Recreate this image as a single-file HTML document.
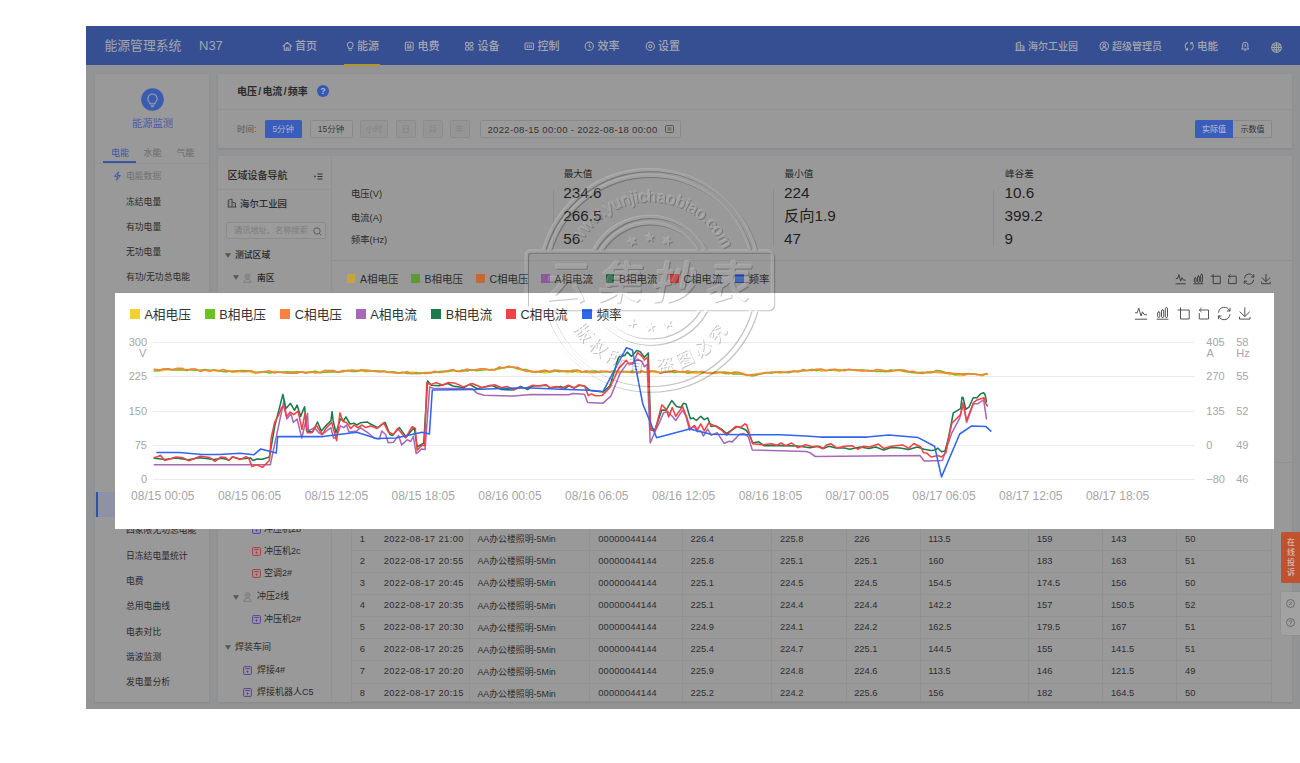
<!DOCTYPE html>
<html lang="zh-CN"><head><meta charset="utf-8"><title>能源管理系统</title>
<style>
html,body{margin:0;padding:0;background:#fff}
body{width:1300px;height:763px;position:relative;overflow:hidden;font-family:"Liberation Sans","Noto Sans CJK SC",sans-serif;}
.t{position:absolute;white-space:nowrap;margin:0}
.r{position:absolute;box-sizing:border-box}
svg{position:absolute;overflow:visible}
</style></head><body>
<div class="r" style="left:86.00px;top:26.00px;width:1214.00px;height:683.00px;background:#929394;"></div>
<div class="r" style="left:86.00px;top:26.00px;width:1214.00px;height:39.00px;background:#364f93;"></div>
<div class="t" style="top:36.70px;font-size:12.8px;line-height:18px;color:#a3a6ae;left:104.50px;">能源管理系统</div>
<div class="t" style="top:36.70px;font-size:13px;line-height:18px;color:#a3a6ae;left:199.00px;">N37</div>
<svg style="left:282.0px;top:41.0px" width="10.5" height="10.5" viewBox="0 0 16 16" fill="none" stroke="#a3a6ae" stroke-width="1.6" stroke-linecap="round" stroke-linejoin="round"><path d="M1.5 8 8 2l6.500 6M3.5 7.5V14h9V7.500M6.500 14v-3.500h3V14"/></svg>
<div class="t" style="top:39.30px;font-size:11px;line-height:15px;color:#a3a6ae;font-weight:500;left:295.00px;">首页</div>
<svg style="left:344.5px;top:41.0px" width="10.5" height="10.5" viewBox="0 0 16 16" fill="none" stroke="#a3a6ae" stroke-width="1.6" stroke-linecap="round" stroke-linejoin="round"><path d="M8 1.500a4.500 4.500 0 0 0-2.500 8.200V11.500h5V9.700A4.500 4.500 0 0 0 8 1.500zM6 14h4"/></svg>
<div class="t" style="top:39.30px;font-size:11px;line-height:15px;color:#a3a6ae;font-weight:500;left:357.00px;">能源</div>
<svg style="left:404.0px;top:41.0px" width="10.5" height="10.5" viewBox="0 0 16 16" fill="none" stroke="#a3a6ae" stroke-width="1.6" stroke-linecap="round" stroke-linejoin="round"><rect x="2" y="2" width="12" height="12" rx="1.500"/><path d="M5 5.500h2M5 8h6M5 10.500h6M10 4.500v2"/></svg>
<div class="t" style="top:39.30px;font-size:11px;line-height:15px;color:#a3a6ae;font-weight:500;left:417.50px;">电费</div>
<svg style="left:464.0px;top:41.0px" width="10.5" height="10.5" viewBox="0 0 16 16" fill="none" stroke="#a3a6ae" stroke-width="1.6" stroke-linecap="round" stroke-linejoin="round"><circle cx="4.700" cy="4.700" r="2.600"/><circle cx="11.300" cy="4.700" r="2.600"/><circle cx="4.700" cy="11.300" r="2.600"/><circle cx="11.300" cy="11.300" r="2.600"/></svg>
<div class="t" style="top:39.30px;font-size:11px;line-height:15px;color:#a3a6ae;font-weight:500;left:477.50px;">设备</div>
<svg style="left:524.0px;top:41.0px" width="10.5" height="10.5" viewBox="0 0 16 16" fill="none" stroke="#a3a6ae" stroke-width="1.6" stroke-linecap="round" stroke-linejoin="round"><rect x="1.500" y="3" width="13" height="10" rx="2"/><path d="M5 6v4M8 6v4M11 6v4"/></svg>
<div class="t" style="top:39.30px;font-size:11px;line-height:15px;color:#a3a6ae;font-weight:500;left:537.50px;">控制</div>
<svg style="left:584.0px;top:41.0px" width="10.5" height="10.5" viewBox="0 0 16 16" fill="none" stroke="#a3a6ae" stroke-width="1.6" stroke-linecap="round" stroke-linejoin="round"><circle cx="8" cy="8" r="6.300"/><path d="M8 4.500V8l2.300 1.500"/></svg>
<div class="t" style="top:39.30px;font-size:11px;line-height:15px;color:#a3a6ae;font-weight:500;left:597.50px;">效率</div>
<svg style="left:645.0px;top:41.0px" width="10.5" height="10.5" viewBox="0 0 16 16" fill="none" stroke="#a3a6ae" stroke-width="1.6" stroke-linecap="round" stroke-linejoin="round"><circle cx="8" cy="8" r="6.300"/><circle cx="8" cy="8" r="2.300"/></svg>
<div class="t" style="top:39.30px;font-size:11px;line-height:15px;color:#a3a6ae;font-weight:500;left:658.00px;">设置</div>
<div class="r" style="left:344.00px;top:63.50px;width:35.50px;height:2.00px;background:#b3952f;"></div>
<svg style="left:1015.0px;top:41.0px" width="10.5" height="10.5" viewBox="0 0 16 16" fill="none" stroke="#a3a6ae" stroke-width="1.6" stroke-linecap="round" stroke-linejoin="round"><path d="M2 14.500V3.500l6-2v13M8 6.500l5.500 1.500v6.500M1 14.500h14M4.500 5.500v1M4.500 8.500v1M4.500 11.500v1M10.800 10v1M10.800 12.500v.5"/></svg>
<div class="t" style="top:39.60px;font-size:10px;line-height:14px;color:#a3a6ae;font-weight:500;left:1028.00px;">海尔工业园</div>
<svg style="left:1099.0px;top:41.0px" width="10.5" height="10.5" viewBox="0 0 16 16" fill="none" stroke="#a3a6ae" stroke-width="1.6" stroke-linecap="round" stroke-linejoin="round"><circle cx="8" cy="8" r="6.500"/><circle cx="8" cy="6.500" r="2.200"/><path d="M4 12.800c.8-2 2.300-2.800 4-2.800s3.200.8 4 2.800"/></svg>
<div class="t" style="top:39.60px;font-size:10px;line-height:14px;color:#a3a6ae;font-weight:500;left:1112.00px;">超级管理员</div>
<svg style="left:1184.0px;top:41.0px" width="10.5" height="10.5" viewBox="0 0 16 16" fill="none" stroke="#a3a6ae" stroke-width="1.6" stroke-linecap="round" stroke-linejoin="round"><path d="M5.500 2.300A6.300 6.300 0 0 0 5 13.500M10.500 13.700A6.300 6.300 0 0 0 11 2.500M3 13.500h2.500V11M13 2.500h-2.500V5"/></svg>
<div class="t" style="top:39.10px;font-size:10.5px;line-height:15px;color:#a3a6ae;font-weight:500;left:1197.00px;">电能</div>
<svg style="left:1240.0px;top:41.4px" width="10.5" height="10.5" viewBox="0 0 16 16" fill="none" stroke="#a3a6ae" stroke-width="1.6" stroke-linecap="round" stroke-linejoin="round"><path d="M8 1.800c-2.500 0-4 1.900-4 4.200v4.500l-1.200 1.700h10.400L12 10.500V6c0-2.300-1.500-4.200-4-4.200zM6.800 14.200h2.400M8 5v3.500"/></svg>
<svg style="left:1270.500px;top:41.500px" width="11" height="11" viewBox="0 0 16 16" fill="none" stroke="#a3a6ae" stroke-width="1.500"><circle cx="8" cy="8" r="7"/><path d="M1 8h14M2.300 4.500h11.400M2.300 11.500h11.400M8 1v14M4.800 4.500v7M11.200 4.500v7"/></svg>
<div class="r" style="left:95.00px;top:74.00px;width:114.00px;height:628.00px;background:#999999;box-shadow:0 1px 2px rgba(0,0,0,.08);"></div>
<svg style="left:141px;top:88px" width="23" height="23" viewBox="0 0 23 23"><circle cx="11.500" cy="11.500" r="11.300" fill="#3a5cb0"/><path d="M11.500 6a4.600 4.600 0 0 0-2.600 8.400v1.300h5.200v-1.300A4.600 4.600 0 0 0 11.500 6z" fill="none" stroke="#9aa0b4" stroke-width="1.100"/><path d="M9.500 17.300h4M10 18.700h3" stroke="#9aa0b4" stroke-width=".9" fill="none"/></svg>
<div class="t" style="top:116.70px;font-size:10.3px;line-height:14px;color:#4a5ba6;left:52.50px;width:200px;text-align:center;">能源监测</div>
<div class="t" style="top:146.70px;font-size:9px;line-height:13px;color:#3f57a8;left:111.00px;">电能</div>
<div class="t" style="top:146.70px;font-size:9px;line-height:13px;color:#6a6a6a;left:143.50px;">水能</div>
<div class="t" style="top:146.70px;font-size:9px;line-height:13px;color:#6a6a6a;left:176.50px;">气能</div>
<div class="r" style="left:95.00px;top:162.80px;width:114.00px;height:0.80px;background:#919191;"></div>
<div class="r" style="left:103.00px;top:161.00px;width:33.00px;height:2.00px;background:#3a56a8;"></div>
<svg style="left:112.500px;top:171px" width="9" height="10" viewBox="0 0 9 10" fill="none" stroke="#3f57a8" stroke-width="1"><path d="M5.500.8 1.500 5.400h3L3.500 9.200l4-4.700h-3z" stroke-linejoin="round"/></svg>
<div class="t" style="top:170.00px;font-size:8.8px;line-height:12px;color:#717171;left:126.00px;">电能数据</div>
<div class="t" style="top:195.50px;font-size:8.8px;line-height:12px;color:#2a2a2a;left:126.00px;">冻结电量</div>
<div class="t" style="top:220.80px;font-size:8.8px;line-height:12px;color:#2a2a2a;left:126.00px;">有功电量</div>
<div class="t" style="top:246.10px;font-size:8.8px;line-height:12px;color:#2a2a2a;left:126.00px;">无功电量</div>
<div class="t" style="top:271.40px;font-size:8.8px;line-height:12px;color:#2a2a2a;left:126.00px;">有功/无功总电能</div>
<div class="t" style="top:296.70px;font-size:8.8px;line-height:12px;color:#2a2a2a;left:126.00px;">分时电量</div>
<div class="t" style="top:322.00px;font-size:8.8px;line-height:12px;color:#2a2a2a;left:126.00px;">尖峰平谷电能</div>
<div class="t" style="top:347.30px;font-size:8.8px;line-height:12px;color:#2a2a2a;left:126.00px;">电能集抄</div>
<div class="t" style="top:372.60px;font-size:8.8px;line-height:12px;color:#2a2a2a;left:126.00px;">需量</div>
<div class="t" style="top:397.90px;font-size:8.8px;line-height:12px;color:#2a2a2a;left:126.00px;">功率因数</div>
<div class="t" style="top:423.20px;font-size:8.8px;line-height:12px;color:#2a2a2a;left:126.00px;">有功功率</div>
<div class="t" style="top:448.50px;font-size:8.8px;line-height:12px;color:#2a2a2a;left:126.00px;">无功功率</div>
<div class="t" style="top:473.80px;font-size:8.8px;line-height:12px;color:#2a2a2a;left:126.00px;">负载率</div>
<div class="r" style="left:95.00px;top:492.00px;width:114.00px;height:25.00px;background:#8f91a4;"></div>
<div class="r" style="left:95.50px;top:492.00px;width:2.00px;height:25.00px;background:#2f4fb0;"></div>
<div class="t" style="top:499.10px;font-size:8.8px;line-height:12px;color:#2a2a2a;left:126.00px;">电压/电流/频率</div>
<div class="t" style="top:524.40px;font-size:8.8px;line-height:12px;color:#2a2a2a;left:126.00px;">四象限无功总电能</div>
<div class="t" style="top:549.70px;font-size:8.8px;line-height:12px;color:#2a2a2a;left:126.00px;">日冻结电量统计</div>
<div class="t" style="top:575.00px;font-size:8.8px;line-height:12px;color:#2a2a2a;left:126.00px;">电费</div>
<div class="t" style="top:600.30px;font-size:8.8px;line-height:12px;color:#2a2a2a;left:126.00px;">总用电曲线</div>
<div class="t" style="top:625.60px;font-size:8.8px;line-height:12px;color:#2a2a2a;left:126.00px;">电表对比</div>
<div class="t" style="top:650.90px;font-size:8.8px;line-height:12px;color:#2a2a2a;left:126.00px;">谐波监测</div>
<div class="t" style="top:676.20px;font-size:8.8px;line-height:12px;color:#2a2a2a;left:126.00px;">发电量分析</div>
<div class="r" style="left:218.00px;top:74.00px;width:1073.50px;height:74.00px;background:#999999;box-shadow:0 1px 2px rgba(0,0,0,.08);"></div>
<div class="r" style="left:218.00px;top:109.00px;width:1073.50px;height:0.80px;background:#919191;"></div>
<div class="t" style="top:85.40px;font-size:10px;line-height:14px;color:#2a2a2a;font-weight:700;left:237.00px;">电压<span style="margin:0 1.3px">/</span>电流<span style="margin:0 1.3px">/</span>频率</div>
<svg style="left:317px;top:85px" width="12" height="12" viewBox="0 0 12 12"><circle cx="6" cy="6" r="6" fill="#3558b4"/></svg>
<div class="t" style="top:84.70px;font-size:9px;line-height:13px;color:#b0b6c8;font-weight:700;left:223.00px;width:200px;text-align:center;">?</div>
<div class="t" style="top:123.40px;font-size:8.5px;line-height:12px;color:#555;left:237.00px;">时间:</div>
<div class="r" style="left:265.00px;top:119.60px;width:36.50px;height:18.00px;background:#3a5cba;border-radius:1.500px"></div>
<div class="t" style="top:122.60px;font-size:8.5px;line-height:12px;color:#a9b2cc;left:183.25px;width:200px;text-align:center;">5分钟</div>
<div class="r" style="left:309.50px;top:119.60px;width:43.00px;height:18.00px;background:#9a9a9a;border:0.8px solid #8a8a8a;border-radius:1.500px"></div>
<div class="t" style="top:122.60px;font-size:8.5px;line-height:12px;color:#3a3a3a;left:231.00px;width:200px;text-align:center;">15分钟</div>
<div class="r" style="left:360.00px;top:119.60px;width:28.00px;height:18.00px;background:#959595;border:0.8px solid #8c8c8c;border-radius:1.500px"></div>
<div class="t" style="top:122.60px;font-size:8.5px;line-height:12px;color:#858585;left:274.00px;width:200px;text-align:center;">小时</div>
<div class="r" style="left:396.00px;top:119.60px;width:19.50px;height:18.00px;background:#959595;border:0.8px solid #8c8c8c;border-radius:1.500px"></div>
<div class="t" style="top:122.60px;font-size:8.5px;line-height:12px;color:#858585;left:305.75px;width:200px;text-align:center;">日</div>
<div class="r" style="left:423.00px;top:119.60px;width:19.50px;height:18.00px;background:#959595;border:0.8px solid #8c8c8c;border-radius:1.500px"></div>
<div class="t" style="top:122.60px;font-size:8.5px;line-height:12px;color:#858585;left:332.75px;width:200px;text-align:center;">月</div>
<div class="r" style="left:450.00px;top:119.60px;width:19.50px;height:18.00px;background:#959595;border:0.8px solid #8c8c8c;border-radius:1.500px"></div>
<div class="t" style="top:122.60px;font-size:8.5px;line-height:12px;color:#858585;left:359.75px;width:200px;text-align:center;">年</div>
<div class="r" style="left:480.00px;top:119.60px;width:200.50px;height:18.00px;background:#9a9a9a;border:0.8px solid #8a8a8a;border-radius:1.500px"></div>
<div class="t" style="top:122.80px;font-size:9.5px;line-height:13px;color:#333;left:487.50px;letter-spacing:.33px;">2022-08-15 00:00 - 2022-08-18 00:00</div>
<svg style="left:665px;top:124.500px" width="9" height="8" viewBox="0 0 9 8" fill="none" stroke="#444" stroke-width=".8"><rect x=".5" y=".5" width="8" height="7" rx="1"/><path d="M2.500 3h4M2.500 5h4"/></svg>
<div class="r" style="left:1194.50px;top:120.00px;width:38.50px;height:17.70px;background:#3a5cba;border-radius:1.500px 0 0 1.500px"></div>
<div class="r" style="left:1233.00px;top:120.00px;width:39.00px;height:17.70px;background:#9a9a9a;border:0.8px solid #8a8a8a;border-left:0;border-radius:0 1.500px 1.500px 0"></div>
<div class="t" style="top:123.50px;font-size:8px;line-height:11px;color:#a9b2cc;font-weight:500;left:1114.00px;width:200px;text-align:center;">实际值</div>
<div class="t" style="top:123.50px;font-size:8px;line-height:11px;color:#333;left:1152.50px;width:200px;text-align:center;">示数值</div>
<div class="r" style="left:218.00px;top:156.40px;width:1073.50px;height:545.60px;background:#999999;box-shadow:0 1px 2px rgba(0,0,0,.08);"></div>
<div class="r" style="left:331.00px;top:156.40px;width:0.90px;height:545.60px;background:#919191;"></div>
<div class="t" style="top:168.90px;font-size:10px;line-height:14px;color:#2a2a2a;font-weight:500;left:227.60px;">区域设备导航</div>
<svg style="left:314px;top:172.500px" width="9" height="7" viewBox="0 0 9 7" fill="none" stroke="#333" stroke-width="1"><path d="M3.500 1h5M3.500 3.500h5M3.500 6h5"/><path d="M.3 2.200 2.200 3.500.3 4.800z" fill="#333" stroke="none"/></svg>
<div class="r" style="left:218.00px;top:189.40px;width:113.00px;height:0.80px;background:#919191;"></div>
<svg style="left:227px;top:198px" width="10" height="10" viewBox="0 0 16 16" fill="none" stroke="#333" stroke-width="1.300"><path d="M2 14.500V3.500l6-2v13M8 6.500l5.500 1.500v6.500M1 14.500h14M4.500 5.500v1M4.500 8.500v1M4.500 11.500v1M10.800 10v1M10.800 12.500v.5"/></svg>
<div class="t" style="top:196.50px;font-size:9.4px;line-height:13px;color:#2a2a2a;font-weight:500;left:240.00px;">海尔工业园</div>
<div class="r" style="left:226.00px;top:221.60px;width:100.00px;height:17.00px;background:#9b9b9b;border:0.8px solid #8d8d8d;border-radius:2px"></div>
<div class="t" style="top:225.10px;font-size:8.2px;line-height:11px;color:#7d7d7d;left:234.00px;">通讯地址、名称搜索</div>
<svg style="left:313px;top:226.500px" width="9" height="9" viewBox="0 0 9 9" fill="none" stroke="#555" stroke-width=".9"><circle cx="4" cy="4" r="3.200"/><path d="M6.300 6.300 8.300 8.300"/></svg>
<svg style="left:225px;top:252.8px" width="6" height="5" viewBox="0 0 6 5"><path d="M0 .3h6L3 4.700z" fill="#555"/></svg>
<div class="t" style="top:249.00px;font-size:8.8px;line-height:12px;color:#2a2a2a;font-weight:500;left:235.00px;">测试区域</div>
<svg style="left:233px;top:275.4px" width="6" height="5" viewBox="0 0 6 5"><path d="M0 .3h6L3 4.700z" fill="#555"/></svg>
<svg style="left:243px;top:272.6px" width="9" height="10" viewBox="0 0 9 10" fill="none" stroke="#777" stroke-width=".8"><circle cx="4.500" cy="3.200" r="2.500"/><circle cx="4.500" cy="3.200" r="1"/><path d="M.8 9.300c.3-2 1.700-3 3.700-3s3.400 1 3.700 3z"/></svg>
<div class="t" style="top:271.60px;font-size:8.8px;line-height:12px;color:#2a2a2a;font-weight:500;left:257.00px;">南区</div>
<svg style="left:251.7px;top:524.5px" width="9" height="9" viewBox="0 0 9 9" fill="none" stroke="#5a3fa0" stroke-width="1"><rect x=".6" y=".6" width="7.800" height="7.800" rx=".8"/><path d="M2.300 2.600h4.400"/><path d="M4.500 4.200v2.600M3.400 5.500h2.200" stroke-width=".8"/></svg>
<div class="t" style="top:522.50px;font-size:9px;line-height:13px;color:#2a2a2a;left:264.00px;">冲压机2b</div>
<svg style="left:251.7px;top:546.9px" width="9" height="9" viewBox="0 0 9 9" fill="none" stroke="#b03a3a" stroke-width="1"><rect x=".6" y=".6" width="7.800" height="7.800" rx=".8"/><path d="M2.300 2.600h4.400"/><path d="M4.500 4.200v2.600M3.400 5.500h2.200" stroke-width=".8"/></svg>
<div class="t" style="top:544.90px;font-size:9px;line-height:13px;color:#2a2a2a;left:264.00px;">冲压机2c</div>
<svg style="left:251.7px;top:569.2px" width="9" height="9" viewBox="0 0 9 9" fill="none" stroke="#b03a3a" stroke-width="1"><rect x=".6" y=".6" width="7.800" height="7.800" rx=".8"/><path d="M2.300 2.600h4.400"/><path d="M4.500 4.200v2.600M3.400 5.500h2.200" stroke-width=".8"/></svg>
<div class="t" style="top:567.20px;font-size:9px;line-height:13px;color:#2a2a2a;left:264.00px;">空调2#</div>
<svg style="left:233px;top:594.5px" width="6" height="5" viewBox="0 0 6 5"><path d="M0 .3h6L3 4.700z" fill="#555"/></svg>
<svg style="left:243px;top:591.7px" width="9" height="10" viewBox="0 0 9 10" fill="none" stroke="#777" stroke-width=".8"><circle cx="4.500" cy="3.200" r="2.500"/><circle cx="4.500" cy="3.200" r="1"/><path d="M.8 9.300c.3-2 1.700-3 3.700-3s3.400 1 3.700 3z"/></svg>
<div class="t" style="top:590.20px;font-size:9px;line-height:13px;color:#2a2a2a;left:257.00px;">冲压2线</div>
<svg style="left:251.7px;top:614.5px" width="9" height="9" viewBox="0 0 9 9" fill="none" stroke="#5a3fa0" stroke-width="1"><rect x=".6" y=".6" width="7.800" height="7.800" rx=".8"/><path d="M2.300 2.600h4.400"/><path d="M4.500 4.200v2.600M3.400 5.500h2.200" stroke-width=".8"/></svg>
<div class="t" style="top:612.50px;font-size:9px;line-height:13px;color:#2a2a2a;left:264.00px;">冲压机2#</div>
<svg style="left:225px;top:644.8px" width="6" height="5" viewBox="0 0 6 5"><path d="M0 .3h6L3 4.700z" fill="#555"/></svg>
<div class="t" style="top:640.50px;font-size:9px;line-height:13px;color:#2a2a2a;left:235.00px;">焊装车间</div>
<svg style="left:243px;top:665.5px" width="9" height="9" viewBox="0 0 9 9" fill="none" stroke="#5a3fa0" stroke-width="1"><rect x=".6" y=".6" width="7.800" height="7.800" rx=".8"/><path d="M2.300 2.600h4.400"/><path d="M4.500 4.200v2.600M3.400 5.500h2.200" stroke-width=".8"/></svg>
<div class="t" style="top:663.50px;font-size:9px;line-height:13px;color:#2a2a2a;left:257.00px;">焊接4#</div>
<svg style="left:243px;top:688.1px" width="9" height="9" viewBox="0 0 9 9" fill="none" stroke="#5a3fa0" stroke-width="1"><rect x=".6" y=".6" width="7.800" height="7.800" rx=".8"/><path d="M2.300 2.600h4.400"/><path d="M4.500 4.200v2.600M3.400 5.500h2.200" stroke-width=".8"/></svg>
<div class="t" style="top:686.10px;font-size:9px;line-height:13px;color:#2a2a2a;left:257.00px;">焊接机器人C5</div>
<div class="r" style="left:332.00px;top:260.30px;width:959.50px;height:0.80px;background:#909090;"></div>
<div class="r" style="left:332.00px;top:462.00px;width:959.50px;height:0.90px;background:#909090;"></div>
<div class="t" style="top:187.90px;font-size:9.3px;line-height:13px;color:#2a2a2a;left:351.00px;">电压(V)</div>
<div class="t" style="top:211.50px;font-size:9.3px;line-height:13px;color:#2a2a2a;left:351.00px;">电流(A)</div>
<div class="t" style="top:234.10px;font-size:9.3px;line-height:13px;color:#2a2a2a;left:351.00px;">频率(Hz)</div>
<div class="r" style="left:552.50px;top:189.00px;width:0.80px;height:57.00px;background:#8c8c8c;"></div>
<div class="t" style="top:166.90px;font-size:9.6px;line-height:13px;color:#2a2a2a;left:563.70px;">最大值</div>
<div class="t" style="top:182.20px;font-size:15.3px;line-height:21px;color:#1f1f1f;left:563.20px;">234.6</div>
<div class="t" style="top:205.20px;font-size:15.3px;line-height:21px;color:#1f1f1f;left:563.20px;">266.5</div>
<div class="t" style="top:228.40px;font-size:15.3px;line-height:21px;color:#1f1f1f;left:563.20px;">56</div>
<div class="r" style="left:772.50px;top:189.00px;width:0.80px;height:57.00px;background:#8c8c8c;"></div>
<div class="t" style="top:166.90px;font-size:9.6px;line-height:13px;color:#2a2a2a;left:784.50px;">最小值</div>
<div class="t" style="top:182.20px;font-size:15.3px;line-height:21px;color:#1f1f1f;left:784.00px;">224</div>
<div class="t" style="top:205.20px;font-size:15.3px;line-height:21px;color:#1f1f1f;left:784.00px;">反向1.9</div>
<div class="t" style="top:228.40px;font-size:15.3px;line-height:21px;color:#1f1f1f;left:784.00px;">47</div>
<div class="r" style="left:993.00px;top:189.00px;width:0.80px;height:57.00px;background:#8c8c8c;"></div>
<div class="t" style="top:166.90px;font-size:9.6px;line-height:13px;color:#2a2a2a;left:1005.00px;">峰谷差</div>
<div class="t" style="top:182.20px;font-size:15.3px;line-height:21px;color:#1f1f1f;left:1004.50px;">10.6</div>
<div class="t" style="top:205.20px;font-size:15.3px;line-height:21px;color:#1f1f1f;left:1004.50px;">399.2</div>
<div class="t" style="top:228.40px;font-size:15.3px;line-height:21px;color:#1f1f1f;left:1004.50px;">9</div>
<div class="r" style="left:346.60px;top:274.20px;width:8.50px;height:8.50px;background:#c5a53a;"></div>
<div class="t" style="top:272.20px;font-size:10.5px;line-height:15px;color:#2c2c2c;left:360.00px;">A相电压</div>
<div class="r" style="left:411.00px;top:274.20px;width:8.50px;height:8.50px;background:#5e9a2e;"></div>
<div class="t" style="top:272.20px;font-size:10.5px;line-height:15px;color:#2c2c2c;left:424.50px;">B相电压</div>
<div class="r" style="left:476.00px;top:274.20px;width:8.50px;height:8.50px;background:#c4683a;"></div>
<div class="t" style="top:272.20px;font-size:10.5px;line-height:15px;color:#2c2c2c;left:489.50px;">C相电压</div>
<div class="r" style="left:541.00px;top:274.20px;width:8.50px;height:8.50px;background:#8a5a96;"></div>
<div class="t" style="top:272.20px;font-size:10.5px;line-height:15px;color:#2c2c2c;left:554.50px;">A相电流</div>
<div class="r" style="left:605.50px;top:274.20px;width:8.50px;height:8.50px;background:#2f6a4c;"></div>
<div class="t" style="top:272.20px;font-size:10.5px;line-height:15px;color:#2c2c2c;left:619.00px;">B相电流</div>
<div class="r" style="left:670.00px;top:274.20px;width:8.50px;height:8.50px;background:#c0403c;"></div>
<div class="t" style="top:272.20px;font-size:10.5px;line-height:15px;color:#2c2c2c;left:683.50px;">C相电流</div>
<div class="r" style="left:735.00px;top:274.20px;width:8.50px;height:8.50px;background:#3558b4;"></div>
<div class="t" style="top:272.20px;font-size:10.5px;line-height:15px;color:#2c2c2c;left:748.50px;">频率</div>
<svg style="left:1170.10px;top:267.85px" width="106.86" height="21.37" viewBox="0 0 130 26" fill="none" stroke="#3a3a3a" stroke-width="1.15" stroke-linejoin="round" stroke-linecap="round"><path d="M7.500 12.800H9.200L10.800 8.100 13 16 14.500 11.800 16 14.500 18.600 14.800M7.200 19.200H18.800"/><rect x="29.600" y="11.800" width="2.200" height="5.700" rx="1.100"/><rect x="33.500" y="9.800" width="2.200" height="7.700" rx="1.100"/><rect x="37.300" y="7.600" width="2.200" height="9.900" rx="1.100"/><path d="M29 19.200H40"/><path d="M50 10H61.200V19H52.500V7.800"/><path d="M73.300 8.200 71.400 10 73.300 11.800M71.400 10H80.500V19H71.300V13.500"/><path d="M90.500 12.300A5.800 5.800 0 0 1 101.600 10.900M102 8.200V11H99.200M101.900 14.700A5.800 5.800 0 0 1 90.800 16.100M90.400 18.800V16H93.200"/><path d="M116.800 7.800V16.300M112 12l4.800 4.500 4.700-4.500M111.500 17.200v1.900H122v-1.900"/></svg>
<div class="r" style="left:351.20px;top:527.80px;width:920.20px;height:0.80px;background:#919191;"></div>
<div class="r" style="left:351.20px;top:549.90px;width:920.20px;height:0.80px;background:#919191;"></div>
<div class="r" style="left:351.20px;top:572.00px;width:920.20px;height:0.80px;background:#919191;"></div>
<div class="r" style="left:351.20px;top:594.10px;width:920.20px;height:0.80px;background:#919191;"></div>
<div class="r" style="left:351.20px;top:616.20px;width:920.20px;height:0.80px;background:#919191;"></div>
<div class="r" style="left:351.20px;top:638.30px;width:920.20px;height:0.80px;background:#919191;"></div>
<div class="r" style="left:351.20px;top:660.40px;width:920.20px;height:0.80px;background:#919191;"></div>
<div class="r" style="left:351.20px;top:682.50px;width:920.20px;height:0.80px;background:#919191;"></div>
<div class="r" style="left:351.20px;top:701.20px;width:920.20px;height:0.80px;background:#919191;"></div>
<div class="r" style="left:351.20px;top:527.80px;width:0.80px;height:174.00px;background:#919191;"></div>
<div class="r" style="left:469.20px;top:527.80px;width:0.80px;height:174.00px;background:#919191;"></div>
<div class="r" style="left:589.30px;top:527.80px;width:0.80px;height:174.00px;background:#919191;"></div>
<div class="r" style="left:681.90px;top:527.80px;width:0.80px;height:174.00px;background:#919191;"></div>
<div class="r" style="left:771.40px;top:527.80px;width:0.80px;height:174.00px;background:#919191;"></div>
<div class="r" style="left:845.50px;top:527.80px;width:0.80px;height:174.00px;background:#919191;"></div>
<div class="r" style="left:919.50px;top:527.80px;width:0.80px;height:174.00px;background:#919191;"></div>
<div class="r" style="left:1028.10px;top:527.80px;width:0.80px;height:174.00px;background:#919191;"></div>
<div class="r" style="left:1102.20px;top:527.80px;width:0.80px;height:174.00px;background:#919191;"></div>
<div class="r" style="left:1176.30px;top:527.80px;width:0.80px;height:174.00px;background:#919191;"></div>
<div class="r" style="left:1271.40px;top:527.80px;width:0.80px;height:174.00px;background:#919191;"></div>
<div class="t" style="top:532.70px;font-size:9.3px;line-height:13px;color:#2e2e2e;left:262.40px;width:200px;text-align:center;">1</div>
<div class="t" style="top:532.70px;font-size:9.3px;line-height:13px;color:#2e2e2e;left:383.70px;letter-spacing:.42px;">2022-08-17 21:00</div>
<div class="t" style="top:533.20px;font-size:8.9px;line-height:12px;color:#2e2e2e;left:477.40px;">AA办公楼照明-5Min</div>
<div class="t" style="top:532.70px;font-size:9.3px;line-height:13px;color:#2e2e2e;left:598.30px;letter-spacing:.15px;">00000044144</div>
<div class="t" style="top:532.70px;font-size:9.3px;line-height:13px;color:#2e2e2e;left:690.60px;">226.4</div>
<div class="t" style="top:532.70px;font-size:9.3px;line-height:13px;color:#2e2e2e;left:780.10px;">225.8</div>
<div class="t" style="top:532.70px;font-size:9.3px;line-height:13px;color:#2e2e2e;left:854.20px;">226</div>
<div class="t" style="top:532.70px;font-size:9.3px;line-height:13px;color:#2e2e2e;left:928.20px;">113.5</div>
<div class="t" style="top:532.70px;font-size:9.3px;line-height:13px;color:#2e2e2e;left:1036.80px;">159</div>
<div class="t" style="top:532.70px;font-size:9.3px;line-height:13px;color:#2e2e2e;left:1110.90px;">143</div>
<div class="t" style="top:532.70px;font-size:9.3px;line-height:13px;color:#2e2e2e;left:1185.00px;">50</div>
<div class="t" style="top:554.80px;font-size:9.3px;line-height:13px;color:#2e2e2e;left:262.40px;width:200px;text-align:center;">2</div>
<div class="t" style="top:554.80px;font-size:9.3px;line-height:13px;color:#2e2e2e;left:383.70px;letter-spacing:.42px;">2022-08-17 20:55</div>
<div class="t" style="top:555.30px;font-size:8.9px;line-height:12px;color:#2e2e2e;left:477.40px;">AA办公楼照明-5Min</div>
<div class="t" style="top:554.80px;font-size:9.3px;line-height:13px;color:#2e2e2e;left:598.30px;letter-spacing:.15px;">00000044144</div>
<div class="t" style="top:554.80px;font-size:9.3px;line-height:13px;color:#2e2e2e;left:690.60px;">225.8</div>
<div class="t" style="top:554.80px;font-size:9.3px;line-height:13px;color:#2e2e2e;left:780.10px;">225.1</div>
<div class="t" style="top:554.80px;font-size:9.3px;line-height:13px;color:#2e2e2e;left:854.20px;">225.1</div>
<div class="t" style="top:554.80px;font-size:9.3px;line-height:13px;color:#2e2e2e;left:928.20px;">160</div>
<div class="t" style="top:554.80px;font-size:9.3px;line-height:13px;color:#2e2e2e;left:1036.80px;">183</div>
<div class="t" style="top:554.80px;font-size:9.3px;line-height:13px;color:#2e2e2e;left:1110.90px;">163</div>
<div class="t" style="top:554.80px;font-size:9.3px;line-height:13px;color:#2e2e2e;left:1185.00px;">51</div>
<div class="t" style="top:576.90px;font-size:9.3px;line-height:13px;color:#2e2e2e;left:262.40px;width:200px;text-align:center;">3</div>
<div class="t" style="top:576.90px;font-size:9.3px;line-height:13px;color:#2e2e2e;left:383.70px;letter-spacing:.42px;">2022-08-17 20:45</div>
<div class="t" style="top:577.40px;font-size:8.9px;line-height:12px;color:#2e2e2e;left:477.40px;">AA办公楼照明-5Min</div>
<div class="t" style="top:576.90px;font-size:9.3px;line-height:13px;color:#2e2e2e;left:598.30px;letter-spacing:.15px;">00000044144</div>
<div class="t" style="top:576.90px;font-size:9.3px;line-height:13px;color:#2e2e2e;left:690.60px;">225.1</div>
<div class="t" style="top:576.90px;font-size:9.3px;line-height:13px;color:#2e2e2e;left:780.10px;">224.5</div>
<div class="t" style="top:576.90px;font-size:9.3px;line-height:13px;color:#2e2e2e;left:854.20px;">224.5</div>
<div class="t" style="top:576.90px;font-size:9.3px;line-height:13px;color:#2e2e2e;left:928.20px;">154.5</div>
<div class="t" style="top:576.90px;font-size:9.3px;line-height:13px;color:#2e2e2e;left:1036.80px;">174.5</div>
<div class="t" style="top:576.90px;font-size:9.3px;line-height:13px;color:#2e2e2e;left:1110.90px;">156</div>
<div class="t" style="top:576.90px;font-size:9.3px;line-height:13px;color:#2e2e2e;left:1185.00px;">50</div>
<div class="t" style="top:599.00px;font-size:9.3px;line-height:13px;color:#2e2e2e;left:262.40px;width:200px;text-align:center;">4</div>
<div class="t" style="top:599.00px;font-size:9.3px;line-height:13px;color:#2e2e2e;left:383.70px;letter-spacing:.42px;">2022-08-17 20:35</div>
<div class="t" style="top:599.50px;font-size:8.9px;line-height:12px;color:#2e2e2e;left:477.40px;">AA办公楼照明-5Min</div>
<div class="t" style="top:599.00px;font-size:9.3px;line-height:13px;color:#2e2e2e;left:598.30px;letter-spacing:.15px;">00000044144</div>
<div class="t" style="top:599.00px;font-size:9.3px;line-height:13px;color:#2e2e2e;left:690.60px;">225.1</div>
<div class="t" style="top:599.00px;font-size:9.3px;line-height:13px;color:#2e2e2e;left:780.10px;">224.4</div>
<div class="t" style="top:599.00px;font-size:9.3px;line-height:13px;color:#2e2e2e;left:854.20px;">224.4</div>
<div class="t" style="top:599.00px;font-size:9.3px;line-height:13px;color:#2e2e2e;left:928.20px;">142.2</div>
<div class="t" style="top:599.00px;font-size:9.3px;line-height:13px;color:#2e2e2e;left:1036.80px;">157</div>
<div class="t" style="top:599.00px;font-size:9.3px;line-height:13px;color:#2e2e2e;left:1110.90px;">150.5</div>
<div class="t" style="top:599.00px;font-size:9.3px;line-height:13px;color:#2e2e2e;left:1185.00px;">52</div>
<div class="t" style="top:621.10px;font-size:9.3px;line-height:13px;color:#2e2e2e;left:262.40px;width:200px;text-align:center;">5</div>
<div class="t" style="top:621.10px;font-size:9.3px;line-height:13px;color:#2e2e2e;left:383.70px;letter-spacing:.42px;">2022-08-17 20:30</div>
<div class="t" style="top:621.60px;font-size:8.9px;line-height:12px;color:#2e2e2e;left:477.40px;">AA办公楼照明-5Min</div>
<div class="t" style="top:621.10px;font-size:9.3px;line-height:13px;color:#2e2e2e;left:598.30px;letter-spacing:.15px;">00000044144</div>
<div class="t" style="top:621.10px;font-size:9.3px;line-height:13px;color:#2e2e2e;left:690.60px;">224.9</div>
<div class="t" style="top:621.10px;font-size:9.3px;line-height:13px;color:#2e2e2e;left:780.10px;">224.1</div>
<div class="t" style="top:621.10px;font-size:9.3px;line-height:13px;color:#2e2e2e;left:854.20px;">224.2</div>
<div class="t" style="top:621.10px;font-size:9.3px;line-height:13px;color:#2e2e2e;left:928.20px;">162.5</div>
<div class="t" style="top:621.10px;font-size:9.3px;line-height:13px;color:#2e2e2e;left:1036.80px;">179.5</div>
<div class="t" style="top:621.10px;font-size:9.3px;line-height:13px;color:#2e2e2e;left:1110.90px;">167</div>
<div class="t" style="top:621.10px;font-size:9.3px;line-height:13px;color:#2e2e2e;left:1185.00px;">51</div>
<div class="t" style="top:643.20px;font-size:9.3px;line-height:13px;color:#2e2e2e;left:262.40px;width:200px;text-align:center;">6</div>
<div class="t" style="top:643.20px;font-size:9.3px;line-height:13px;color:#2e2e2e;left:383.70px;letter-spacing:.42px;">2022-08-17 20:25</div>
<div class="t" style="top:643.70px;font-size:8.9px;line-height:12px;color:#2e2e2e;left:477.40px;">AA办公楼照明-5Min</div>
<div class="t" style="top:643.20px;font-size:9.3px;line-height:13px;color:#2e2e2e;left:598.30px;letter-spacing:.15px;">00000044144</div>
<div class="t" style="top:643.20px;font-size:9.3px;line-height:13px;color:#2e2e2e;left:690.60px;">225.4</div>
<div class="t" style="top:643.20px;font-size:9.3px;line-height:13px;color:#2e2e2e;left:780.10px;">224.7</div>
<div class="t" style="top:643.20px;font-size:9.3px;line-height:13px;color:#2e2e2e;left:854.20px;">225.1</div>
<div class="t" style="top:643.20px;font-size:9.3px;line-height:13px;color:#2e2e2e;left:928.20px;">144.5</div>
<div class="t" style="top:643.20px;font-size:9.3px;line-height:13px;color:#2e2e2e;left:1036.80px;">155</div>
<div class="t" style="top:643.20px;font-size:9.3px;line-height:13px;color:#2e2e2e;left:1110.90px;">141.5</div>
<div class="t" style="top:643.20px;font-size:9.3px;line-height:13px;color:#2e2e2e;left:1185.00px;">51</div>
<div class="t" style="top:665.30px;font-size:9.3px;line-height:13px;color:#2e2e2e;left:262.40px;width:200px;text-align:center;">7</div>
<div class="t" style="top:665.30px;font-size:9.3px;line-height:13px;color:#2e2e2e;left:383.70px;letter-spacing:.42px;">2022-08-17 20:20</div>
<div class="t" style="top:665.80px;font-size:8.9px;line-height:12px;color:#2e2e2e;left:477.40px;">AA办公楼照明-5Min</div>
<div class="t" style="top:665.30px;font-size:9.3px;line-height:13px;color:#2e2e2e;left:598.30px;letter-spacing:.15px;">00000044144</div>
<div class="t" style="top:665.30px;font-size:9.3px;line-height:13px;color:#2e2e2e;left:690.60px;">225.9</div>
<div class="t" style="top:665.30px;font-size:9.3px;line-height:13px;color:#2e2e2e;left:780.10px;">224.8</div>
<div class="t" style="top:665.30px;font-size:9.3px;line-height:13px;color:#2e2e2e;left:854.20px;">224.6</div>
<div class="t" style="top:665.30px;font-size:9.3px;line-height:13px;color:#2e2e2e;left:928.20px;">113.5</div>
<div class="t" style="top:665.30px;font-size:9.3px;line-height:13px;color:#2e2e2e;left:1036.80px;">146</div>
<div class="t" style="top:665.30px;font-size:9.3px;line-height:13px;color:#2e2e2e;left:1110.90px;">121.5</div>
<div class="t" style="top:665.30px;font-size:9.3px;line-height:13px;color:#2e2e2e;left:1185.00px;">49</div>
<div class="t" style="top:687.40px;font-size:9.3px;line-height:13px;color:#2e2e2e;left:262.40px;width:200px;text-align:center;">8</div>
<div class="t" style="top:687.40px;font-size:9.3px;line-height:13px;color:#2e2e2e;left:383.70px;letter-spacing:.42px;">2022-08-17 20:15</div>
<div class="t" style="top:687.90px;font-size:8.9px;line-height:12px;color:#2e2e2e;left:477.40px;">AA办公楼照明-5Min</div>
<div class="t" style="top:687.40px;font-size:9.3px;line-height:13px;color:#2e2e2e;left:598.30px;letter-spacing:.15px;">00000044144</div>
<div class="t" style="top:687.40px;font-size:9.3px;line-height:13px;color:#2e2e2e;left:690.60px;">225.2</div>
<div class="t" style="top:687.40px;font-size:9.3px;line-height:13px;color:#2e2e2e;left:780.10px;">224.2</div>
<div class="t" style="top:687.40px;font-size:9.3px;line-height:13px;color:#2e2e2e;left:854.20px;">225.6</div>
<div class="t" style="top:687.40px;font-size:9.3px;line-height:13px;color:#2e2e2e;left:928.20px;">156</div>
<div class="t" style="top:687.40px;font-size:9.3px;line-height:13px;color:#2e2e2e;left:1036.80px;">182</div>
<div class="t" style="top:687.40px;font-size:9.3px;line-height:13px;color:#2e2e2e;left:1110.90px;">164.5</div>
<div class="t" style="top:687.40px;font-size:9.3px;line-height:13px;color:#2e2e2e;left:1185.00px;">50</div>
<div class="r" style="left:1281.00px;top:532.30px;width:22.00px;height:50.30px;background:#bf5330;border-radius:2px 0 0 2px"></div>
<div class="t" style="top:536.50px;font-size:8px;line-height:11px;color:#d9b8a8;font-weight:500;left:1191.00px;width:200px;text-align:center;">在</div>
<div class="t" style="top:546.70px;font-size:8px;line-height:11px;color:#d9b8a8;font-weight:500;left:1191.00px;width:200px;text-align:center;">线</div>
<div class="t" style="top:556.90px;font-size:8px;line-height:11px;color:#d9b8a8;font-weight:500;left:1191.00px;width:200px;text-align:center;">投</div>
<div class="t" style="top:567.10px;font-size:8px;line-height:11px;color:#d9b8a8;font-weight:500;left:1191.00px;width:200px;text-align:center;">诉</div>
<div class="r" style="left:1281.00px;top:591.50px;width:22.00px;height:43.50px;background:#a2a2a2;border-radius:2px 0 0 2px;box-shadow:0 0 2px rgba(0,0,0,.12)"></div>
<svg style="left:1286px;top:599px" width="9" height="9" viewBox="0 0 9 9" fill="none" stroke="#555" stroke-width=".7"><circle cx="4.500" cy="4.500" r="4"/><path d="M3 6 6 3M3.500 3.800l1-1M5.500 5.200l-1 1"/></svg>
<svg style="left:1286px;top:618px" width="9" height="9" viewBox="0 0 9 9" fill="none" stroke="#555" stroke-width=".7"><circle cx="4.500" cy="4.500" r="4"/><path d="M3.300 3.500a1.200 1.200 0 1 1 1.200 1.300v.7M4.500 6.500v.4"/></svg>
<div class="r" style="left:115.00px;top:292.70px;width:1159.20px;height:236.00px;background:#ffffff;"></div>
<div class="r" style="left:129.70px;top:308.80px;width:10.40px;height:10.20px;background:#f5d02f;"></div>
<div class="t" style="top:306.30px;font-size:12.7px;line-height:18px;color:#333;left:144.40px;">A相电压</div>
<div class="r" style="left:204.60px;top:308.80px;width:10.40px;height:10.20px;background:#6cc21f;"></div>
<div class="t" style="top:306.30px;font-size:12.7px;line-height:18px;color:#333;left:219.30px;">B相电压</div>
<div class="r" style="left:280.10px;top:308.80px;width:10.40px;height:10.20px;background:#fb8140;"></div>
<div class="t" style="top:306.30px;font-size:12.7px;line-height:18px;color:#333;left:294.80px;">C相电压</div>
<div class="r" style="left:355.60px;top:308.80px;width:10.40px;height:10.20px;background:#a868b8;"></div>
<div class="t" style="top:306.30px;font-size:12.7px;line-height:18px;color:#333;left:370.30px;">A相电流</div>
<div class="r" style="left:431.00px;top:308.80px;width:10.40px;height:10.20px;background:#1d7a4f;"></div>
<div class="t" style="top:306.30px;font-size:12.7px;line-height:18px;color:#333;left:445.70px;">B相电流</div>
<div class="r" style="left:505.70px;top:308.80px;width:10.40px;height:10.20px;background:#f44141;"></div>
<div class="t" style="top:306.30px;font-size:12.7px;line-height:18px;color:#333;left:520.40px;">C相电流</div>
<div class="r" style="left:581.70px;top:308.80px;width:10.40px;height:10.20px;background:#2f66f0;"></div>
<div class="t" style="top:306.30px;font-size:12.7px;line-height:18px;color:#333;left:596.40px;">频率</div>
<svg style="left:1128.00px;top:300.00px" width="130.00" height="26.00" viewBox="0 0 130 26" fill="none" stroke="#555" stroke-width="1.0" stroke-linejoin="round" stroke-linecap="round"><path d="M7.500 12.800H9.200L10.800 8.100 13 16 14.500 11.800 16 14.500 18.600 14.800M7.200 19.200H18.800"/><rect x="29.600" y="11.800" width="2.200" height="5.700" rx="1.100"/><rect x="33.500" y="9.800" width="2.200" height="7.700" rx="1.100"/><rect x="37.300" y="7.600" width="2.200" height="9.900" rx="1.100"/><path d="M29 19.200H40"/><path d="M50 10H61.200V19H52.500V7.800"/><path d="M73.300 8.200 71.400 10 73.300 11.800M71.400 10H80.500V19H71.300V13.500"/><path d="M90.500 12.300A5.800 5.800 0 0 1 101.600 10.900M102 8.200V11H99.200M101.900 14.700A5.800 5.800 0 0 1 90.800 16.100M90.400 18.800V16H93.200"/><path d="M116.800 7.800V16.300M112 12l4.800 4.500 4.700-4.500M111.500 17.200v1.900H122v-1.900"/></svg>
<div class="r" style="left:152.50px;top:341.90px;width:1042.50px;height:0.90px;background:#ececec;"></div>
<div class="t" style="top:335.10px;font-size:11px;line-height:15px;color:#a6a6a6;right:1153.00px;">300</div>
<div class="t" style="top:335.10px;font-size:11px;line-height:15px;color:#a6a6a6;left:1206.30px;">405</div>
<div class="t" style="top:335.10px;font-size:11px;line-height:15px;color:#a6a6a6;left:1236.20px;">58</div>
<div class="r" style="left:152.50px;top:376.20px;width:1042.50px;height:0.90px;background:#ececec;"></div>
<div class="t" style="top:369.40px;font-size:11px;line-height:15px;color:#a6a6a6;right:1153.00px;">225</div>
<div class="t" style="top:369.40px;font-size:11px;line-height:15px;color:#a6a6a6;left:1206.30px;">270</div>
<div class="t" style="top:369.40px;font-size:11px;line-height:15px;color:#a6a6a6;left:1236.20px;">55</div>
<div class="r" style="left:152.50px;top:410.70px;width:1042.50px;height:0.90px;background:#ececec;"></div>
<div class="t" style="top:403.90px;font-size:11px;line-height:15px;color:#a6a6a6;right:1153.00px;">150</div>
<div class="t" style="top:403.90px;font-size:11px;line-height:15px;color:#a6a6a6;left:1206.30px;">135</div>
<div class="t" style="top:403.90px;font-size:11px;line-height:15px;color:#a6a6a6;left:1236.20px;">52</div>
<div class="r" style="left:152.50px;top:444.80px;width:1042.50px;height:0.90px;background:#ececec;"></div>
<div class="t" style="top:438.00px;font-size:11px;line-height:15px;color:#a6a6a6;right:1153.00px;">75</div>
<div class="t" style="top:438.00px;font-size:11px;line-height:15px;color:#a6a6a6;left:1206.30px;">0</div>
<div class="t" style="top:438.00px;font-size:11px;line-height:15px;color:#a6a6a6;left:1236.20px;">49</div>
<div class="r" style="left:152.50px;top:479.10px;width:1042.50px;height:0.90px;background:#ececec;"></div>
<div class="t" style="top:472.30px;font-size:11px;line-height:15px;color:#a6a6a6;right:1153.00px;">0</div>
<div class="t" style="top:472.30px;font-size:11px;line-height:15px;color:#a6a6a6;left:1206.30px;">−80</div>
<div class="t" style="top:472.30px;font-size:11px;line-height:15px;color:#a6a6a6;left:1236.20px;">46</div>
<div class="t" style="top:345.80px;font-size:11px;line-height:15px;color:#a6a6a6;right:1153.70px;">V</div>
<div class="t" style="top:345.80px;font-size:11px;line-height:15px;color:#a6a6a6;left:1206.50px;">A</div>
<div class="t" style="top:345.80px;font-size:11px;line-height:15px;color:#a6a6a6;left:1236.20px;">Hz</div>
<div class="t" style="top:487.50px;font-size:12px;line-height:17px;color:#a6a6a6;left:62.80px;width:200px;text-align:center;">08/15 00:05</div>
<div class="t" style="top:487.50px;font-size:12px;line-height:17px;color:#a6a6a6;left:149.60px;width:200px;text-align:center;">08/15 06:05</div>
<div class="t" style="top:487.50px;font-size:12px;line-height:17px;color:#a6a6a6;left:236.40px;width:200px;text-align:center;">08/15 12:05</div>
<div class="t" style="top:487.50px;font-size:12px;line-height:17px;color:#a6a6a6;left:323.20px;width:200px;text-align:center;">08/15 18:05</div>
<div class="t" style="top:487.50px;font-size:12px;line-height:17px;color:#a6a6a6;left:410.00px;width:200px;text-align:center;">08/16 00:05</div>
<div class="t" style="top:487.50px;font-size:12px;line-height:17px;color:#a6a6a6;left:496.80px;width:200px;text-align:center;">08/16 06:05</div>
<div class="t" style="top:487.50px;font-size:12px;line-height:17px;color:#a6a6a6;left:583.60px;width:200px;text-align:center;">08/16 12:05</div>
<div class="t" style="top:487.50px;font-size:12px;line-height:17px;color:#a6a6a6;left:670.40px;width:200px;text-align:center;">08/16 18:05</div>
<div class="t" style="top:487.50px;font-size:12px;line-height:17px;color:#a6a6a6;left:757.20px;width:200px;text-align:center;">08/17 00:05</div>
<div class="t" style="top:487.50px;font-size:12px;line-height:17px;color:#a6a6a6;left:844.00px;width:200px;text-align:center;">08/17 06:05</div>
<div class="t" style="top:487.50px;font-size:12px;line-height:17px;color:#a6a6a6;left:930.80px;width:200px;text-align:center;">08/17 12:05</div>
<div class="t" style="top:487.50px;font-size:12px;line-height:17px;color:#a6a6a6;left:1017.60px;width:200px;text-align:center;">08/17 18:05</div>
<svg style="left:0;top:0" width="1300" height="763" viewBox="0 0 1300 763"><polyline fill="none" stroke="#f5d02f" stroke-width="1.55" stroke-linejoin="round" stroke-linecap="round" points="154.3,369.4 158.9,370.9 163.5,370.5 168.1,369.1 172.7,369.7 177.3,369.6 181.9,370.2 186.5,370.7 191.1,369.1 195.7,369.1 200.3,371.1 204.9,370.3 209.5,371.2 214.1,369.5 218.7,370.6 223.3,371.4 227.9,370.3 232.5,372.2 237.1,372.2 241.7,370.3 246.3,370.6 250.9,372.2 255.5,373.5 260.1,372.3 264.7,371.8 269.3,372.2 273.9,371.2 278.5,371.7 283.1,372.4 287.7,372.7 292.3,372.1 296.9,372.0 301.5,371.8 306.1,372.3 310.7,371.8 315.3,371.0 319.9,372.9 324.5,372.1 329.1,372.2 333.7,370.9 338.3,372.6 342.9,372.0 347.5,370.0 352.1,370.4 356.7,371.3 361.3,371.3 365.9,371.8 370.5,370.6 375.1,371.8 379.7,371.7 384.3,371.0 388.9,372.0 393.5,372.9 398.1,373.2 402.7,372.6 407.3,373.1 411.9,372.0 416.5,372.4 421.1,373.6 425.7,372.7 430.3,372.0 434.9,372.5 439.5,372.6 444.1,372.2 448.7,371.1 453.3,371.0 457.9,370.9 462.5,371.3 467.1,370.5 471.7,370.0 476.3,370.1 480.9,368.9 485.5,368.8 490.1,370.3 494.7,370.3 499.3,368.8 503.9,367.9 508.5,366.9 513.1,367.3 517.7,369.2 522.3,370.0 526.9,370.6 531.5,372.2 536.1,370.9 540.7,371.7 545.3,372.9 549.9,371.9 554.5,371.6 559.1,371.1 563.7,371.8 568.3,372.7 572.9,370.4 577.5,372.2 582.1,372.3 586.7,372.5 591.3,372.2 595.9,372.5 600.5,371.8 605.1,372.0 609.7,371.7 614.3,370.8 618.9,372.8 623.5,372.1 628.1,371.3 632.7,372.1 637.3,372.0 641.9,371.8 646.5,371.8 651.1,372.2 655.7,372.5 660.3,372.5 664.9,372.1 669.5,371.1 674.1,371.6 678.7,371.5 683.3,372.6 687.9,373.3 692.5,373.3 697.1,373.4 701.7,373.5 706.3,372.2 710.9,373.7 715.5,373.4 720.1,372.1 724.7,372.1 729.3,372.3 733.9,374.2 738.5,373.2 743.1,373.0 747.7,374.9 752.3,375.2 756.9,373.7 761.5,373.1 766.1,373.3 770.7,372.3 775.3,372.3 779.9,373.2 784.5,372.4 789.1,371.9 793.7,371.9 798.3,370.4 802.9,370.9 807.5,370.6 812.1,369.6 816.7,369.2 821.3,371.2 825.9,370.4 830.5,369.8 835.1,370.8 839.7,371.4 844.3,369.5 848.9,369.5 853.5,369.9 858.1,371.3 862.7,370.0 867.3,371.3 871.9,371.2 876.5,370.9 881.1,370.1 885.7,371.9 890.3,371.5 894.9,370.8 899.5,370.1 904.1,371.7 908.7,371.6 913.3,372.6 917.9,372.2 922.5,373.2 927.1,372.1 931.7,372.3 936.3,372.6 940.9,373.0 945.5,372.5 950.1,374.7 954.7,374.3 959.3,375.8 963.9,375.2 968.5,374.3 973.1,374.2 977.7,374.1 982.3,376.0 986.9,373.2 987.0,374.3"/><polyline fill="none" stroke="#6cc21f" stroke-width="1.55" stroke-linejoin="round" stroke-linecap="round" points="154.3,370.9 158.9,370.7 163.5,368.9 168.1,368.7 172.7,370.1 177.3,370.0 181.9,370.0 186.5,369.4 191.1,370.1 195.7,370.2 200.3,370.3 204.9,369.6 209.5,370.2 214.1,370.3 218.7,371.0 223.3,371.6 227.9,371.6 232.5,371.0 237.1,370.9 241.7,370.8 246.3,370.7 250.9,371.0 255.5,372.2 260.1,372.0 264.7,372.1 269.3,372.9 273.9,372.2 278.5,372.3 283.1,371.9 287.7,371.7 292.3,372.2 296.9,371.8 301.5,372.3 306.1,373.1 310.7,372.4 315.3,371.4 319.9,372.6 324.5,372.3 329.1,372.0 333.7,372.1 338.3,371.7 342.9,371.5 347.5,370.5 352.1,371.5 356.7,371.4 361.3,370.0 365.9,371.1 370.5,371.0 375.1,370.8 379.7,371.1 384.3,371.3 388.9,372.3 393.5,371.8 398.1,372.7 402.7,372.2 407.3,373.4 411.9,373.6 416.5,372.7 421.1,372.9 425.7,373.4 430.3,373.0 434.9,372.2 439.5,371.4 444.1,371.2 448.7,371.6 453.3,370.3 457.9,371.4 462.5,370.1 467.1,371.0 471.7,369.7 476.3,370.8 480.9,370.2 485.5,369.7 490.1,369.6 494.7,369.3 499.3,368.5 503.9,367.6 508.5,367.0 513.1,367.1 517.7,368.6 522.3,369.4 526.9,369.6 531.5,371.7 536.1,371.7 540.7,372.2 545.3,371.0 549.9,372.0 554.5,370.7 559.1,371.8 563.7,371.0 568.3,370.9 572.9,372.0 577.5,370.6 582.1,371.4 586.7,372.0 591.3,371.0 595.9,371.0 600.5,372.3 605.1,371.5 609.7,372.1 614.3,370.9 618.9,371.5 623.5,371.2 628.1,372.1 632.7,371.1 637.3,372.7 641.9,371.1 646.5,372.3 651.1,371.1 655.7,371.5 660.3,372.6 664.9,371.4 669.5,371.5 674.1,372.4 678.7,371.9 683.3,371.3 687.9,373.1 692.5,371.7 697.1,371.6 701.7,372.3 706.3,372.8 710.9,373.2 715.5,372.1 720.1,372.6 724.7,372.2 729.3,373.1 733.9,373.9 738.5,374.0 743.1,374.5 747.7,374.9 752.3,376.0 756.9,374.9 761.5,373.7 766.1,372.6 770.7,373.2 775.3,372.4 779.9,371.8 784.5,372.2 789.1,372.8 793.7,371.1 798.3,371.5 802.9,370.8 807.5,370.6 812.1,369.5 816.7,370.8 821.3,369.6 825.9,370.4 830.5,370.2 835.1,369.5 839.7,370.5 844.3,369.8 848.9,369.7 853.5,369.7 858.1,370.0 862.7,369.9 867.3,370.8 871.9,370.6 876.5,371.5 881.1,371.4 885.7,371.5 890.3,370.1 894.9,370.5 899.5,370.2 904.1,371.3 908.7,371.9 913.3,372.7 917.9,372.8 922.5,372.2 927.1,372.8 931.7,372.7 936.3,370.4 940.9,371.0 945.5,372.6 950.1,372.9 954.7,374.9 959.3,374.0 963.9,373.7 968.5,373.8 973.1,374.1 977.7,374.6 982.3,374.9 986.9,374.1 987.0,374.1"/><polyline fill="none" stroke="#fb8140" stroke-width="1.55" stroke-linejoin="round" stroke-linecap="round" points="154.3,369.2 158.9,369.8 163.5,369.2 168.1,369.6 172.7,369.6 177.3,368.2 181.9,368.2 186.5,370.5 191.1,369.1 195.7,369.1 200.3,371.2 204.9,369.9 209.5,371.0 214.1,370.2 218.7,370.7 223.3,369.6 227.9,370.9 232.5,371.7 237.1,370.9 241.7,371.7 246.3,371.8 250.9,370.6 255.5,372.7 260.1,372.4 264.7,371.6 269.3,370.8 273.9,372.9 278.5,371.9 283.1,372.7 287.7,373.3 292.3,372.9 296.9,373.3 301.5,371.8 306.1,372.8 310.7,371.7 315.3,372.9 319.9,372.6 324.5,370.5 329.1,370.5 333.7,370.5 338.3,372.2 342.9,370.6 347.5,370.9 352.1,369.9 356.7,370.4 361.3,370.1 365.9,370.0 370.5,370.6 375.1,370.9 379.7,371.9 384.3,371.6 388.9,372.5 393.5,372.6 398.1,373.2 402.7,372.7 407.3,371.6 411.9,373.6 416.5,373.8 421.1,373.6 425.7,372.6 430.3,372.9 434.9,371.3 439.5,372.5 444.1,371.5 448.7,370.4 453.3,369.6 457.9,371.4 462.5,371.5 467.1,369.0 471.7,370.6 476.3,369.5 480.9,368.7 485.5,369.0 490.1,370.1 494.7,369.8 499.3,367.0 503.9,368.0 508.5,366.1 513.1,367.4 517.7,367.2 522.3,370.0 526.9,371.4 531.5,371.0 536.1,372.4 540.7,370.8 545.3,370.3 549.9,371.6 554.5,370.1 559.1,370.5 563.7,371.0 568.3,371.5 572.9,370.3 577.5,369.9 582.1,372.1 586.7,370.7 591.3,372.5 595.9,372.4 600.5,371.1 605.1,371.3 609.7,371.5 614.3,371.9 618.9,371.8 623.5,371.7 628.1,371.9 632.7,372.8 637.3,371.7 641.9,371.5 646.5,372.3 651.1,371.1 655.7,371.3 660.3,373.0 664.9,371.9 669.5,372.0 674.1,370.6 678.7,371.7 683.3,372.2 687.9,370.8 692.5,372.5 697.1,372.6 701.7,371.2 706.3,372.8 710.9,372.4 715.5,373.1 720.1,372.3 724.7,373.4 729.3,373.7 733.9,372.0 738.5,372.2 743.1,374.0 747.7,375.4 752.3,374.5 756.9,374.2 761.5,373.8 766.1,372.4 770.7,372.3 775.3,372.0 779.9,372.0 784.5,372.4 789.1,371.4 793.7,371.3 798.3,371.9 802.9,369.5 807.5,370.5 812.1,370.6 816.7,369.3 821.3,369.1 825.9,370.8 830.5,369.4 835.1,369.3 839.7,370.0 844.3,370.8 848.9,369.3 853.5,369.9 858.1,369.9 862.7,371.3 867.3,370.2 871.9,371.3 876.5,369.5 881.1,370.0 885.7,370.8 890.3,371.4 894.9,370.3 899.5,369.7 904.1,369.9 908.7,371.6 913.3,371.2 917.9,373.0 922.5,373.4 927.1,371.9 931.7,371.8 936.3,371.9 940.9,372.0 945.5,373.3 950.1,373.0 954.7,373.4 959.3,373.8 963.9,375.0 968.5,373.5 973.1,374.0 977.7,374.7 982.3,374.5 986.9,373.7 987.0,373.9"/><polyline fill="none" stroke="#a868b8" stroke-width="1.55" stroke-linejoin="round" stroke-linecap="round" points="154.3,464.8 270.3,464.8 284.1,399.9 286.7,419.0 291.0,413.8 293.3,422.4 297.1,419.0 301.8,438.0 307.5,413.4 308.4,431.0 314.4,427.6 318.7,432.8 322.2,434.5 330.9,427.6 333.5,438.0 336.0,438.0 340.4,425.9 343.8,427.6 346.4,425.0 349.0,432.0 356.8,431.0 360.3,427.6 368.0,432.8 370.0,434.5 374.3,438.3 379.5,438.9 381.8,431.0 385.6,434.5 388.2,442.7 393.4,442.3 398.6,435.4 401.7,444.9 407.2,439.7 410.7,441.5 413.3,436.3 416.2,453.6 421.9,448.9 425.0,449.6 429.7,386.9 433.2,388.2 472.1,388.7 477.3,393.3 484.2,395.2 513.6,396.1 531.0,394.4 569.0,394.7 572.5,393.5 584.6,394.2 587.6,402.5 603.0,403.2 610.8,396.2 620.3,372.9 627.2,363.4 632.4,364.2 637.6,359.0 641.9,361.6 644.5,366.8 647.1,364.2 650.2,443.0 655.8,430.0 659.2,423.1 663.6,412.7 667.9,411.8 672.2,416.2 675.7,420.5 682.6,410.1 686.0,416.2 689.5,430.0 693.8,425.7 697.3,431.7 700.8,430.9 703.4,436.0 707.7,429.1 711.1,435.2 717.2,432.6 724.1,443.3 729.3,441.2 731.9,442.1 739.7,434.3 744.0,433.5 748.4,436.9 752.2,449.9 806.3,451.6 810.0,452.7 815.2,456.5 919.9,455.6 924.2,461.0 942.4,460.5 945.9,450.1 951.9,432.8 959.7,418.1 963.2,402.5 966.6,422.4 973.5,403.4 977.9,403.7 983.6,399.9 986.5,419.0"/><polyline fill="none" stroke="#1d7a4f" stroke-width="1.55" stroke-linejoin="round" stroke-linecap="round" points="154.3,458.2 165.0,459.5 176.0,458.0 188.0,459.8 200.0,457.8 214.0,459.5 222.0,458.2 229.0,460.0 233.0,457.0 240.0,459.0 250.4,457.9 253.0,460.5 257.0,459.0 262.5,459.3 269.4,457.0 275.0,425.0 282.9,394.4 285.9,408.6 290.5,403.4 294.5,410.3 297.1,405.1 300.6,416.4 304.6,406.8 306.6,431.0 312.7,432.0 317.5,422.0 321.3,431.0 326.5,425.0 330.9,420.7 332.1,411.7 333.1,420.7 336.0,432.8 340.4,419.0 343.8,420.7 345.9,416.9 349.9,424.0 354.2,423.3 356.8,425.0 360.3,422.8 367.2,421.9 370.0,423.8 377.8,427.6 385.1,422.4 389.9,434.5 392.5,435.4 399.4,427.6 406.3,437.1 414.1,427.6 417.1,446.7 423.7,443.2 427.6,380.9 431.4,385.2 439.2,385.7 447.9,383.5 453.0,386.0 463.5,387.8 469.5,384.3 477.3,388.7 491.2,385.2 501.5,389.5 513.6,390.0 520.6,386.4 527.5,389.5 532.7,386.0 546.5,385.2 550.0,387.8 560.4,386.4 565.6,388.2 569.0,385.7 574.2,387.8 579.4,385.2 584.6,386.0 589.8,390.4 603.0,391.9 609.9,385.9 618.6,357.3 624.6,355.6 627.2,352.1 631.5,356.4 636.7,350.4 640.2,351.8 644.5,357.3 648.3,353.0 650.6,428.3 654.9,430.0 661.8,410.1 666.2,410.1 671.7,400.6 676.5,406.6 680.9,407.5 683.5,403.2 686.0,404.0 690.4,418.7 693.0,417.9 696.4,420.5 700.8,416.2 704.2,419.6 707.7,417.9 711.1,426.5 715.5,425.7 721.5,429.1 726.7,433.5 737.1,426.5 742.3,428.3 745.8,430.0 749.2,434.3 752.7,443.0 758.7,441.8 763.9,445.6 780.4,445.6 797.7,445.9 809.8,447.7 818.7,446.3 823.8,448.4 829.0,446.3 836.0,448.0 844.6,448.0 849.8,449.2 860.2,447.0 868.8,448.4 875.8,447.0 883.6,450.1 891.3,447.5 900.0,447.9 908.7,449.6 917.3,447.0 924.2,449.2 931.1,450.6 935.5,450.1 937.7,448.0 941.5,451.8 945.0,451.0 948.5,438.0 953.3,412.9 960.6,408.6 962.0,397.3 963.2,397.8 965.8,409.4 969.2,406.8 973.2,397.8 977.0,397.8 980.5,393.9 983.6,392.7 985.1,394.7 986.5,401.7"/><polyline fill="none" stroke="#f44141" stroke-width="1.55" stroke-linejoin="round" stroke-linecap="round" points="154.3,457.5 157.8,456.7 160.4,455.3 164.7,460.5 176.0,457.0 182.0,457.4 188.9,460.8 200.2,456.2 209.7,457.5 214.9,461.4 221.0,457.0 225.3,457.4 228.7,460.5 232.2,456.7 240.0,459.6 246.0,456.7 248.6,457.9 252.1,466.6 256.4,464.8 262.5,467.4 269.4,460.5 271.2,438.0 274.6,422.4 278.9,414.6 281.5,407.7 283.5,406.0 286.7,416.4 290.2,412.0 293.7,414.6 298.0,411.2 302.0,429.3 304.9,413.8 307.5,432.8 311.8,432.8 316.1,425.0 322.2,434.5 326.5,427.6 331.7,422.4 336.6,440.6 340.0,412.9 343.0,421.6 346.4,422.4 350.8,428.5 354.2,425.0 357.7,427.6 362.0,425.0 365.5,427.6 370.7,425.9 376.9,428.5 383.8,422.8 388.2,431.9 393.4,434.5 397.7,428.5 405.5,438.0 412.1,426.7 415.3,428.5 417.1,450.1 421.9,445.3 424.5,445.8 426.8,382.6 430.6,384.7 435.8,382.6 442.7,385.2 447.9,382.6 454.8,383.1 463.5,386.9 472.1,383.5 482.5,387.8 494.6,384.7 501.5,387.8 506.7,386.4 513.6,389.5 520.6,387.5 525.8,388.2 532.7,385.2 539.6,386.0 545.7,384.7 550.0,387.8 556.9,386.4 562.1,388.2 568.2,385.2 574.2,388.2 578.5,384.9 584.6,386.0 588.4,395.6 591.5,393.9 595.2,395.7 602.1,395.4 609.9,387.6 618.6,368.6 626.3,360.4 628.9,363.4 633.3,362.5 637.6,352.5 641.9,356.4 644.5,359.9 647.6,357.3 650.6,430.0 654.9,430.9 661.8,404.9 666.2,409.2 668.7,417.0 672.2,407.5 675.7,416.2 682.6,406.6 686.9,417.9 690.4,429.1 694.7,425.7 697.3,430.0 700.8,423.9 704.2,430.9 708.6,423.1 714.6,425.7 721.5,430.0 726.7,435.2 735.4,426.5 740.6,427.4 744.9,423.9 746.6,424.8 752.7,443.8 763.1,444.7 771.7,443.8 776.9,445.2 781.2,443.0 785.6,445.6 791.6,443.0 797.7,447.7 805.5,444.7 811.5,446.4 816.9,446.3 823.0,448.7 826.4,444.9 830.8,443.7 836.8,447.9 844.6,446.3 852.4,445.8 857.6,449.2 863.7,446.3 869.7,447.0 878.4,444.1 883.6,448.4 891.3,446.3 902.6,444.9 908.7,448.4 913.8,443.5 920.8,447.0 923.4,452.7 926.8,453.1 931.1,457.0 938.1,455.6 941.5,457.0 945.9,452.7 948.5,438.0 951.9,423.3 960.6,414.6 963.2,403.4 966.6,420.7 973.5,402.5 977.0,399.9 983.9,397.8 985.7,403.4 987.4,406.0"/><polyline fill="none" stroke="#2f66f0" stroke-width="1.55" stroke-linejoin="round" stroke-linecap="round" points="156.9,452.4 179.4,452.4 201.9,454.4 219.2,454.4 240.0,453.2 253.8,454.8 260.8,448.9 276.3,453.0 277.6,436.6 323.0,436.6 356.8,432.3 375.0,438.0 376.9,438.5 396.0,438.0 421.9,432.3 429.4,434.0 432.3,390.0 473.8,389.5 525.8,387.8 560.4,389.2 590.0,390.2 603.0,391.6 626.3,347.8 632.4,350.0 642.8,404.0 656.6,437.8 689.5,429.1 711.1,434.3 745.8,434.7 780.4,434.7 810.0,436.3 820.4,437.1 867.1,437.1 888.7,434.9 918.2,437.6 934.6,446.3 941.5,476.9 959.7,434.0 971.8,425.9 985.7,426.4 990.9,431.1"/></svg>
<svg style="left:0;top:0;pointer-events:none" width="1300" height="763" viewBox="0 0 1300 763"><filter id="emb" x="-5%" y="-5%" width="110%" height="110%" color-interpolation-filters="sRGB">
<feFlood flood-color="#fff" flood-opacity="0.085"/><feComposite in2="SourceAlpha" operator="in" result="body"/>
<feOffset in="SourceAlpha" dx="0.7" dy="0.7" result="o1"/><feComposite in="o1" in2="SourceAlpha" operator="out" result="e1"/>
<feFlood flood-color="#000" flood-opacity="0.23"/><feComposite in2="e1" operator="in" result="dark"/>
<feOffset in="SourceAlpha" dx="-0.8" dy="-0.8" result="o2"/><feComposite in="o2" in2="SourceAlpha" operator="out" result="e2"/>
<feFlood flood-color="#fff" flood-opacity="0.2"/><feComposite in2="e2" operator="in" result="light"/>
<feMerge><feMergeNode in="body"/><feMergeNode in="light"/><feMergeNode in="dark"/></feMerge></filter><g filter="url(#emb)" fill="#000" stroke="none"><path fill="none" stroke="#000" stroke-width="2.4" d="M544.3 250.2A110.2 110.2 0 0 1 756.3 250.2M756.3 310.4A110.2 110.2 0 0 1 544.3 310.4M550.2 250.2A104.5 104.5 0 0 1 750.4 250.2M750.4 310.4A104.5 104.5 0 0 1 550.2 310.4M594.5 250.2A63.4 63.4 0 0 1 706.1 250.2M706.1 310.4A63.4 63.4 0 0 1 594.5 310.4M601.8 250.2A57.1 57.1 0 0 1 698.8 250.2M698.8 310.4A57.1 57.1 0 0 1 601.8 310.4"/><rect fill="none" stroke="#000" stroke-width="2.4" x="526.8" y="251.45" width="246.2" height="57.6" rx="4.5"/><polygon points="630.1,236.6 632.7,239.2 636.1,237.9 634.4,241.1 636.8,244.0 633.2,243.4 631.2,246.5 630.7,242.9 627.1,242.0 630.4,240.3"/><polygon points="649.9,232.3 651.2,235.7 654.8,235.9 652.0,238.2 653.0,241.7 649.9,239.7 646.9,241.7 647.8,238.2 645.0,235.9 648.6,235.7"/><polygon points="669.6,236.3 669.4,239.9 672.7,241.5 669.2,242.5 668.7,246.1 666.7,243.0 663.1,243.7 665.4,240.8 663.6,237.6 667.1,238.9"/><polygon points="633.9,318.1 633.6,321.7 636.9,323.4 633.3,324.3 632.8,327.9 630.8,324.8 627.2,325.4 629.6,322.6 627.9,319.3 631.3,320.7"/><polygon points="650.1,321.6 651.4,325.0 655.0,325.2 652.1,327.5 653.1,331.0 650.1,329.0 647.0,331.0 648.0,327.5 645.1,325.2 648.8,325.0"/><polygon points="665.5,318.6 667.9,321.3 671.4,320.1 669.6,323.3 671.8,326.2 668.2,325.5 666.2,328.5 665.7,324.9 662.2,323.8 665.6,322.3"/><path id="wmtop" fill="none" d="M570.8 281.3A79.5 79.5 0 0 1 729.8 281.3"/><path id="wmbot" fill="none" d="M559.5 281.3A90.8 90.8 0 0 0 741.0999999999999 281.3"/><text font-family="'Liberation Sans',sans-serif" font-size="16.6" text-anchor="middle"><textPath href="#wmtop" startOffset="51.4%">www.yunjichaobiao.com</textPath></text><text font-family="'Liberation Sans','Noto Sans CJK SC',sans-serif" font-size="17.6" letter-spacing="4.7" text-anchor="middle"><textPath href="#wmbot" startOffset="50.8%">版权所有 盗图必究</textPath></text><text x="0" y="0" transform="translate(542.5 298.5) skewX(-11)" font-family="'Liberation Sans','Noto Sans CJK SC',sans-serif" font-weight="500" font-size="45" letter-spacing="9">云集抄表</text></g></svg>
</body></html>
